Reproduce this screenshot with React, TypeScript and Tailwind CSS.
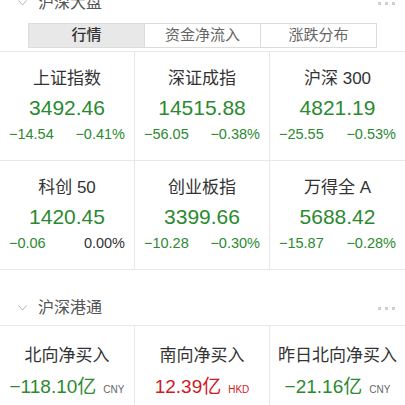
import React from 'react'

type Quote = { name: string; value: string; change: string; pct: string }

const quotes: Quote[] = [
  { name: '上证指数', value: '3492.46', change: '−14.54', pct: '−0.41%' },
  { name: '深证成指', value: '14515.88', change: '−56.05', pct: '−0.38%' },
  { name: '沪深 300', value: '4821.19', change: '−25.55', pct: '−0.53%' },
  { name: '科创 50', value: '1420.45', change: '−0.06', pct: '0.00%' },
  { name: '创业板指', value: '3399.66', change: '−10.28', pct: '−0.30%' },
  { name: '万得全 A', value: '5688.42', change: '−15.87', pct: '−0.28%' },
]

const flows = [
  { name: '北向净买入', value: '−118.10', unit: 'CNY', up: false },
  { name: '南向净买入', value: '12.39', unit: 'HKD', up: true },
  { name: '昨日北向净买入', value: '−21.16', unit: 'CNY', up: false },
]

function SectionHeader({ title }: { title: string }) {
  return (
    <div className="flex h-[34px] items-center pl-[18px] pr-[10px]">
      <svg width="9" height="6" viewBox="0 0 9 6" className="mr-[11px]">
        <polyline points="0.5,0.5 4.5,5 8.5,0.5" fill="none" stroke="#b5b5b5" strokeWidth="1" />
      </svg>
      <span className="text-[16px] text-[#555]">{title}</span>
      <div className="ml-auto flex gap-[4px]">
        <span className="h-[3px] w-[3px] bg-[#cfcfcf]" />
        <span className="h-[3px] w-[3px] bg-[#cfcfcf]" />
        <span className="h-[3px] w-[3px] bg-[#cfcfcf]" />
      </div>
    </div>
  )
}

function Tabs() {
  const tabs = ['行情', '资金净流入', '涨跌分布']
  return (
    <div className="mx-[28px] mt-[3px] mb-[3px] flex h-[25px] border border-[#dcdcdc]">
      {tabs.map((t, i) => (
        <div
          key={t}
          className={
            'flex flex-1 items-center justify-center text-[15px] ' +
            (i === 0 ? 'bg-[#e8e8e8] font-medium text-[#333]' : 'border-l border-[#dcdcdc] bg-white text-[#666]')
          }
        >
          {t}
        </div>
      ))}
    </div>
  )
}

function QuoteCell({ q, last }: { q: Quote; last: boolean }) {
  const flat = q.pct === '0.00%'
  return (
    <div className={'flex flex-col items-center pt-[15px] pb-[13px] ' + (last ? '' : 'border-r border-[#e8e8e8]')}>
      <div className="flex h-[24px] items-center text-[17px] text-[#333]">{q.name}</div>
      <div className="mt-[2px] flex h-[30px] items-center text-[21px] text-[#2b8a30]">{q.value}</div>
      <div className="flex h-[24px] w-full items-center justify-between px-[9px] text-[14.5px]">
        <span className="text-[#2b8a30]">{q.change}</span>
        <span className={flat ? 'text-[#333]' : 'text-[#2b8a30]'}>{q.pct}</span>
      </div>
    </div>
  )
}

export default function App() {
  return (
    <div
      className="h-[405px] w-[405px] overflow-hidden bg-white"
      style={{ fontFamily: '"Liberation Sans", "Noto Sans CJK SC", sans-serif' }}
    >
      <div className="-mt-[14px]">
        <SectionHeader title="沪深大盘" />
        <Tabs />
        <div className="grid grid-cols-3 border-t border-[#e8e8e8]">
          {quotes.map((q, i) => (
            <div key={q.name} className="border-b border-[#e8e8e8]">
              <QuoteCell q={q} last={i % 3 === 2} />
            </div>
          ))}
        </div>
        <div className="h-[21px]" />
        <SectionHeader title="沪深港通" />
        <div className="grid grid-cols-3 border-t border-[#e8e8e8]">
          {flows.map((f, i) => (
            <div
              key={f.name}
              className={'flex flex-col items-center pt-[18px] pb-[12px] ' + (i < 2 ? 'border-r border-[#e8e8e8]' : '')}
            >
              <div className="flex h-[24px] items-center text-[17px] text-[#333]">{f.name}</div>
              <div className="mt-[2px] flex h-[30px] items-baseline pt-[3px]">
                <span className={'text-[19px] ' + (f.up ? 'text-[#cf1a1f]' : 'text-[#2b8a30]')}>
                  {f.value}亿
                </span>
                <span className={'ml-[7px] text-[10px] ' + (f.up ? 'text-[#cf1a1f]' : 'text-[#666]')}>{f.unit}</span>
              </div>
            </div>
          ))}
        </div>
      </div>
    </div>
  )
}
